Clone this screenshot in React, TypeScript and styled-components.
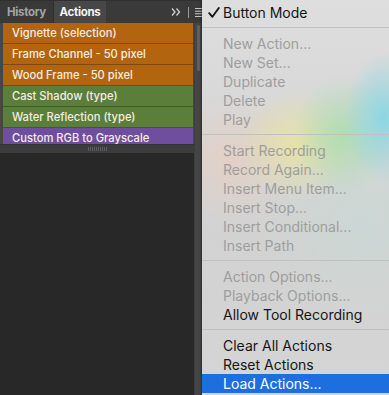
import React from "react";
import styled, { createGlobalStyle } from "styled-components";

const Global = createGlobalStyle`
  html, body { margin: 0; padding: 0; background: #282828; overflow: hidden; }
  #root { width: 389px; height: 395px; }
`;

const Screen = styled.div`
  display: flex;
  width: 389px;
  height: 395px;
  overflow: hidden;
  font-family: Inter, "Noto Sans", "DejaVu Sans", sans-serif;
`;

const LeftPane = styled.div`
  width: 202px;
  flex: none;
  display: flex;
  flex-direction: column;
  background: #282828;
`;

const TabBar = styled.div`
  height: 23px;
  flex: none;
  display: flex;
  align-items: stretch;
  background: #3a3a3a;
  border-top: 1px solid #303030;
  box-sizing: border-box;
`;

const Tab = styled.div<{ $active?: boolean }>`
  width: ${(p) => (p.$active ? "52px" : "53px")};
  display: flex;
  align-items: center;
  justify-content: center;
  font-size: 11.5px;
  font-weight: 700;
  letter-spacing: -0.3px;
  color: ${(p) => (p.$active ? "#f4f4f4" : "#a4a4a4")};
  background: ${(p) => (p.$active ? "#474747" : "#393939")};
  border-right: 1px solid ${(p) => (p.$active ? "#393939" : "#2e2e2e")};
`;

const Tools = styled.div`
  margin-left: auto;
  display: flex;
  align-items: center;
`;

const ToolIcon = styled.svg`
  display: block;
  flex: none;
`;

const ToolDivider = styled.span`
  display: block;
  width: 1px;
  height: 11px;
  background: #9a9a9a;
  margin: 0 6px 0 7px;
`;

const Body = styled.div`
  flex: 1;
  display: flex;
  min-height: 0;
`;

const PanelColumn = styled.div`
  width: 194px;
  flex: none;
  display: flex;
  flex-direction: column;
`;

const List = styled.div`
  height: 121px;
  flex: none;
  overflow: hidden;
  background: #474747;
  padding: 0 1px 0 3px;
  box-sizing: border-box;
`;

const palette = {
  orange: { bg: "#b2640f", line: "#7d4a12" },
  green: { bg: "#5b7e3a", line: "#3f5a29" },
  purple: { bg: "#6f4ea0", line: "#4f3775" },
};

type Tone = keyof typeof palette;

const ActionRow = styled.div<{ $tone: Tone }>`
  height: 21px;
  box-sizing: border-box;
  display: flex;
  align-items: center;
  padding-left: 9px;
  background: ${(p) => palette[p.$tone].bg};
  border-bottom: 1px solid ${(p) => palette[p.$tone].line};
  color: #f5ede4;
  font-size: 11.2px;
  font-weight: 500;
  white-space: nowrap;
`;

const BottomBar = styled.div`
  height: 9px;
  flex: none;
  display: flex;
  align-items: center;
  justify-content: center;
  background: #3c3c3c;
  border-top: 1px solid #333333;
  box-sizing: border-box;
`;

const Grip = styled.div`
  width: 19px;
  height: 4px;
  background: repeating-linear-gradient(90deg, #5e5e5e 0 1px, transparent 1px 2px);
`;

const DarkFill = styled.div`
  flex: 1;
  background: #282828;
`;

const Strip = styled.div`
  width: 8px;
  flex: none;
  background: #454545;
  border-left: 1px solid #3e3e3e;
  box-sizing: border-box;
  display: flex;
  flex-direction: column;
`;

const Thumb = styled.div`
  width: 3px;
  height: 46px;
  margin: 2px 0 0 2px;
  border-radius: 2px;
  background: #5f5f5f;
`;

const Menu = styled.div`
  flex: 1;
  display: flex;
  flex-direction: column;
  padding-top: 3px;
  box-sizing: border-box;
  font-size: 14px;
  background:
    radial-gradient(ellipse 40px 65px at 182px 118px, rgba(130, 215, 228, 0.9), transparent),
    radial-gradient(ellipse 48px 60px at 140px 135px, rgba(165, 222, 170, 0.8), transparent),
    radial-gradient(ellipse 58px 55px at 95px 145px, rgba(236, 230, 150, 0.75), transparent),
    radial-gradient(ellipse 65px 65px at 30px 160px, rgba(236, 205, 188, 0.6), transparent),
    radial-gradient(ellipse 100px 90px at 160px 225px, rgba(195, 222, 215, 0.45), transparent),
    linear-gradient(180deg, #dedede 0%, #d6d6d6 35%, #d2d2d2 60%, #d5d5d5 100%);
  box-shadow: -1px 0 2px rgba(0, 0, 0, 0.35);
`;

const Item = styled.div<{ $disabled?: boolean; $selected?: boolean }>`
  height: 19px;
  flex: none;
  display: flex;
  align-items: center;
  padding-left: 4px;
  white-space: nowrap;
  color: ${(p) => (p.$selected ? "#ffffff" : p.$disabled ? "#9e9e9e" : "#161616")};
  background: ${(p) => (p.$selected ? "#1d6fdf" : "transparent")};
`;

const Mark = styled.span`
  width: 17px;
  flex: none;
  display: flex;
  align-items: center;
`;

const CheckIcon = styled.svg`
  display: block;
  margin-left: 2px;
  margin-top: -1px;
`;

const Separator = styled.div`
  height: 1px;
  flex: none;
  margin: 5px 0 6px;
  background: #c1c1c1;
`;

const actions: { label: string; tone: Tone }[] = [
  { label: "Vignette (selection)", tone: "orange" },
  { label: "Frame Channel - 50 pixel", tone: "orange" },
  { label: "Wood Frame - 50 pixel", tone: "orange" },
  { label: "Cast Shadow (type)", tone: "green" },
  { label: "Water Reflection (type)", tone: "green" },
  { label: "Custom RGB to Grayscale", tone: "purple" },
];

type Entry =
  | { sep: true }
  | { label: string; disabled?: boolean; checked?: boolean; selected?: boolean };

const menu: Entry[] = [
  { label: "Button Mode", checked: true },
  { sep: true },
  { label: "New Action...", disabled: true },
  { label: "New Set...", disabled: true },
  { label: "Duplicate", disabled: true },
  { label: "Delete", disabled: true },
  { label: "Play", disabled: true },
  { sep: true },
  { label: "Start Recording", disabled: true },
  { label: "Record Again...", disabled: true },
  { label: "Insert Menu Item...", disabled: true },
  { label: "Insert Stop...", disabled: true },
  { label: "Insert Conditional...", disabled: true },
  { label: "Insert Path", disabled: true },
  { sep: true },
  { label: "Action Options...", disabled: true },
  { label: "Playback Options...", disabled: true },
  { label: "Allow Tool Recording" },
  { sep: true },
  { label: "Clear All Actions" },
  { label: "Reset Actions" },
  { label: "Load Actions...", selected: true },
];

export default function App() {
  return (
    <>
      <Global />
      <Screen>
        <LeftPane>
          <TabBar>
            <Tab>History</Tab>
            <Tab $active>Actions</Tab>
            <Tools>
              <ToolIcon width="10" height="8" viewBox="0 0 10 8">
                <path d="M1 0.5 L4 4 L1 7.5 M5.5 0.5 L8.5 4 L5.5 7.5" fill="none" stroke="#cfcfcf" strokeWidth="1.3" />
              </ToolIcon>
              <ToolDivider />
              <ToolIcon width="7" height="9" viewBox="0 0 7 9">
                <path d="M0 0.5 H7 M0 3.2 H7 M0 5.8 H7 M0 8.5 H7" stroke="#c6c6c6" strokeWidth="1" />
              </ToolIcon>
            </Tools>
          </TabBar>
          <Body>
            <PanelColumn>
              <List>
                {actions.map((a) => (
                  <ActionRow key={a.label} $tone={a.tone}>
                    {a.label}
                  </ActionRow>
                ))}
              </List>
              <BottomBar>
                <Grip />
              </BottomBar>
              <DarkFill />
            </PanelColumn>
            <Strip>
              <Thumb />
            </Strip>
          </Body>
        </LeftPane>
        <Menu>
          {menu.map((m, i) =>
            "sep" in m ? (
              <Separator key={i} />
            ) : (
              <Item key={i} $disabled={m.disabled} $selected={m.selected}>
                <Mark>
                  {m.checked && (
                    <CheckIcon width="12" height="11" viewBox="0 0 12 11">
                      <path
                        d="M1.2 6.2 L4.4 9.8 L10.8 1"
                        fill="none"
                        stroke="#161616"
                        strokeWidth="1.9"
                        strokeLinecap="round"
                        strokeLinejoin="round"
                      />
                    </CheckIcon>
                  )}
                </Mark>
                {m.label}
              </Item>
            )
          )}
        </Menu>
      </Screen>
    </>
  );
}
